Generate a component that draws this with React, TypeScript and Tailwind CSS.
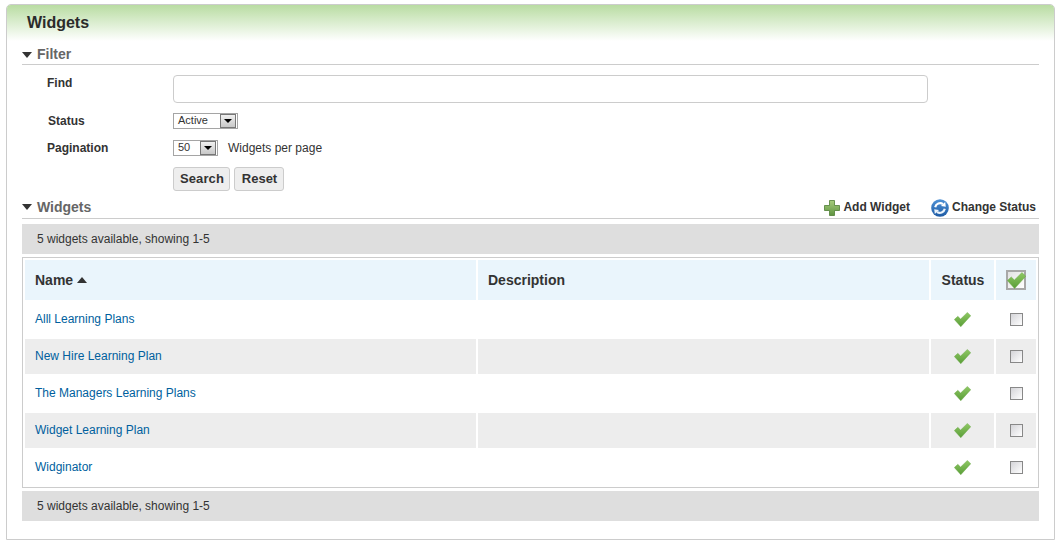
import React from 'react';

const rows = ['Alll Learning Plans', 'New Hire Learning Plan', 'The Managers Learning Plans', 'Widget Learning Plan', 'Widginator'];

const Check = ({ className, id }: { className: string; id: string }) => (
    <svg viewBox="0 0 16 14" className={className}>
        <defs>
            <linearGradient id={id} x1="0" y1="0" x2="0" y2="1">
                <stop offset="0" stopColor="#8fc864" />
                <stop offset="1" stopColor="#5a9e38" />
            </linearGradient>
        </defs>
        <path d="M0.3 7 L3.6 4 L6.2 6.6 L12.6 0.3 L15.8 3.4 L6.4 13.8 Z" fill={`url(#${id})`} stroke="#6aa845" strokeWidth="0.4" strokeLinejoin="round" />
    </svg>
);

const Triangle = ({ up }: { up?: boolean }) => (
    <svg viewBox="0 0 10 6" className="w-[10px] h-[6px]">
        <path d={up ? 'M0 6 L5 0 L10 6 Z' : 'M0 0 L10 0 L5 6 Z'} fill="#333" />
    </svg>
);

const SelectBox = ({ label, className }: { label: string; className: string }) => (
    <div className={`h-4 border border-[#a5a5a5] flex items-center pl-1 pr-px text-[11px] leading-none text-[#333] ${className}`}>
        <span className="flex-1 pb-px">{label}</span>
        <span className="w-[16px] h-[14px] border border-[#777] bg-gradient-to-b from-[#f0f0f0] to-[#c8c8c8] flex items-center justify-center">
            <span className="w-0 h-0 border-x-[4px] border-x-transparent border-t-[4px] border-t-black" />
        </span>
    </div>
);

const SectionHead = ({ title, children, className }: { title: string; children?: React.ReactNode; className: string }) => (
    <div className={`flex items-center border-b border-[#ccc] ${className}`}>
        <Triangle />
        <span className="ml-[5px] text-[14px] font-bold text-[#666]">{title}</span>
        {children}
    </div>
);

const Summary = () => (
    <div className="h-[30px] bg-[#dedede] pl-[15px] flex items-center text-[12px] text-[#333]">5 widgets available, showing 1-5</div>
);

const App: React.FC = () => {
    return (
        <div className="bg-white w-[1063px] h-[545px] pt-1 pl-[6px] font-['Liberation_Sans',Arial,sans-serif] overflow-hidden">
            <div className="w-[1049px] h-[536px] border border-[#ccc] rounded-t-[5px]">
                <div className="h-[36px] rounded-t-[4px] bg-gradient-to-b from-[#b9dca2] to-white pl-5 pt-[9px] text-[16px] leading-[18px] font-bold text-[#2b2b2b]">Widgets</div>

                <div className="px-[15px] w-[1047px]">
                    <SectionHead title="Filter" className="h-[24px] pt-[4px]" />

                    <div className="flex h-[48px] pt-[10px]">
                        <div className="w-[151px] pl-[25px] pt-[1px] text-[12px] leading-[14px] font-bold text-[#333]">Find</div>
                        <div className="w-[755px] h-[28px] border border-[#ccc] rounded-[4px] bg-white" />
                    </div>

                    <div className="flex items-center h-[16px]">
                        <div className="w-[151px] pl-[26px] text-[12px] font-bold text-[#333]">Status</div>
                        <SelectBox label="Active" className="w-[65px]" />
                    </div>

                    <div className="flex items-center h-[16px] mt-[11px]">
                        <div className="w-[151px] pl-[25px] text-[12px] font-bold text-[#333]">Pagination</div>
                        <SelectBox label="50" className="w-[45px]" />
                        <span className="ml-[10px] text-[12px] text-[#333]">Widgets per page</span>
                    </div>

                    <div className="flex gap-1 mt-[11px] ml-[151px]">
                        <button className="h-6 w-[57px] border border-[#ccc] rounded-[3px] bg-[#eee] text-[13px] font-bold text-[#333] tracking-[0.1px] pl-px">Search</button>
                        <button className="h-6 w-[50px] border border-[#ccc] rounded-[3px] bg-[#eee] text-[13px] font-bold text-[#333] pl-px">Reset</button>
                    </div>

                    <SectionHead title="Widgets" className="h-[25px] mt-[3px] pt-[2px]">
                        <div className="ml-auto flex items-center text-[12px] font-bold text-[#333] pr-[3px]">
                            <svg viewBox="0 0 16 16" className="w-4 h-4 mr-[3px] mt-[2px]">
                                <defs>
                                    <linearGradient id="plusFill" x1="0" y1="0" x2="0" y2="1">
                                        <stop offset="0" stopColor="#a6cc7c" />
                                        <stop offset="1" stopColor="#5f9440" />
                                    </linearGradient>
                                </defs>
                                <path d="M5.5 0.5 H10.5 V5.5 H15.5 V10.5 H10.5 V15.5 H5.5 V10.5 H0.5 V5.5 H5.5 Z" fill="url(#plusFill)" stroke="#4f7f35" strokeWidth="0.8" />
                            </svg>
                            <span>Add Widget</span>
                            <svg viewBox="0 0 18 18" className="w-[18px] h-[18px] ml-[21px] mr-[3px] mt-[2px]">
                                <defs>
                                    <linearGradient id="refreshFill" x1="0" y1="0" x2="0" y2="1">
                                        <stop offset="0" stopColor="#4f92d6" />
                                        <stop offset="1" stopColor="#1c5aa4" />
                                    </linearGradient>
                                </defs>
                                <circle cx="9" cy="9" r="8.8" fill="url(#refreshFill)" />
                                <path d="M4.2 8.2 A5 5 0 0 1 12 5.2" fill="none" stroke="#fff" strokeWidth="2.2" />
                                <path d="M10 7 L14.8 7.8 L14.2 3 Z" fill="#fff" />
                                <path d="M13.8 9.8 A5 5 0 0 1 6 12.8" fill="none" stroke="#eaf3fb" strokeWidth="2.2" />
                                <path d="M8 11 L3.2 10.2 L3.8 15 Z" fill="#eaf3fb" />
                            </svg>
                            <span>Change Status</span>
                        </div>
                    </SectionHead>

                    <div className="mt-[5px]"><Summary /></div>

                    <div className="mt-[3px] border border-[#ccc] p-[2px] pb-0 h-[231px]">
                        <div className="grid grid-cols-[451px_451px_63px_40px] gap-x-[2px] text-[12px]">
                            <div className="h-10 bg-[#eaf5fc] pl-[10px] flex items-center gap-1 text-[14px] font-bold text-[#333]">
                                Name <Triangle up />
                            </div>
                            <div className="h-10 bg-[#eaf5fc] pl-[10px] flex items-center text-[14px] font-bold text-[#333]">Description</div>
                            <div className="h-10 bg-[#eaf5fc] pl-px flex items-center justify-center text-[14px] font-bold text-[#333]">Status</div>
                            <div className="h-10 bg-[#eaf5fc] flex items-center justify-center">
                                <div className="relative w-5 h-5 border-2 border-[#a8a8a8] bg-gradient-to-br from-[#e2e2e2] to-white">
                                    <Check id="headCheck" className="absolute top-0 -left-[1px] w-[19px] h-[17px]" />
                                </div>
                            </div>
                            {rows.map((name, i) => {
                                const bg = i % 2 === 1 ? 'bg-[#ededed]' : 'bg-white';
                                const h = i % 2 === 1 ? 'h-[35px]' : 'h-[39px]';
                                return (
                                    <React.Fragment key={name}>
                                        <div className={`${h} ${bg} pl-[10px] pb-[2px] flex items-center`}>
                                            <a href="#" className="text-[#005f9e]">{name}</a>
                                        </div>
                                        <div className={`${h} ${bg}`} />
                                        <div className={`${h} ${bg} flex items-center justify-center`}>
                                            <Check id={`rowCheck${i}`} className="w-[17px] h-[15px]" />
                                        </div>
                                        <div className={`${h} ${bg} flex items-center justify-center`}>
                                            <div className="w-[13px] h-[13px] border border-[#888] bg-gradient-to-br from-[#d4d4d8] to-white" />
                                        </div>
                                    </React.Fragment>
                                );
                            })}
                        </div>
                    </div>

                    <div className="mt-[3px]"><Summary /></div>
                </div>
            </div>
        </div>
    );
};

export default App;
